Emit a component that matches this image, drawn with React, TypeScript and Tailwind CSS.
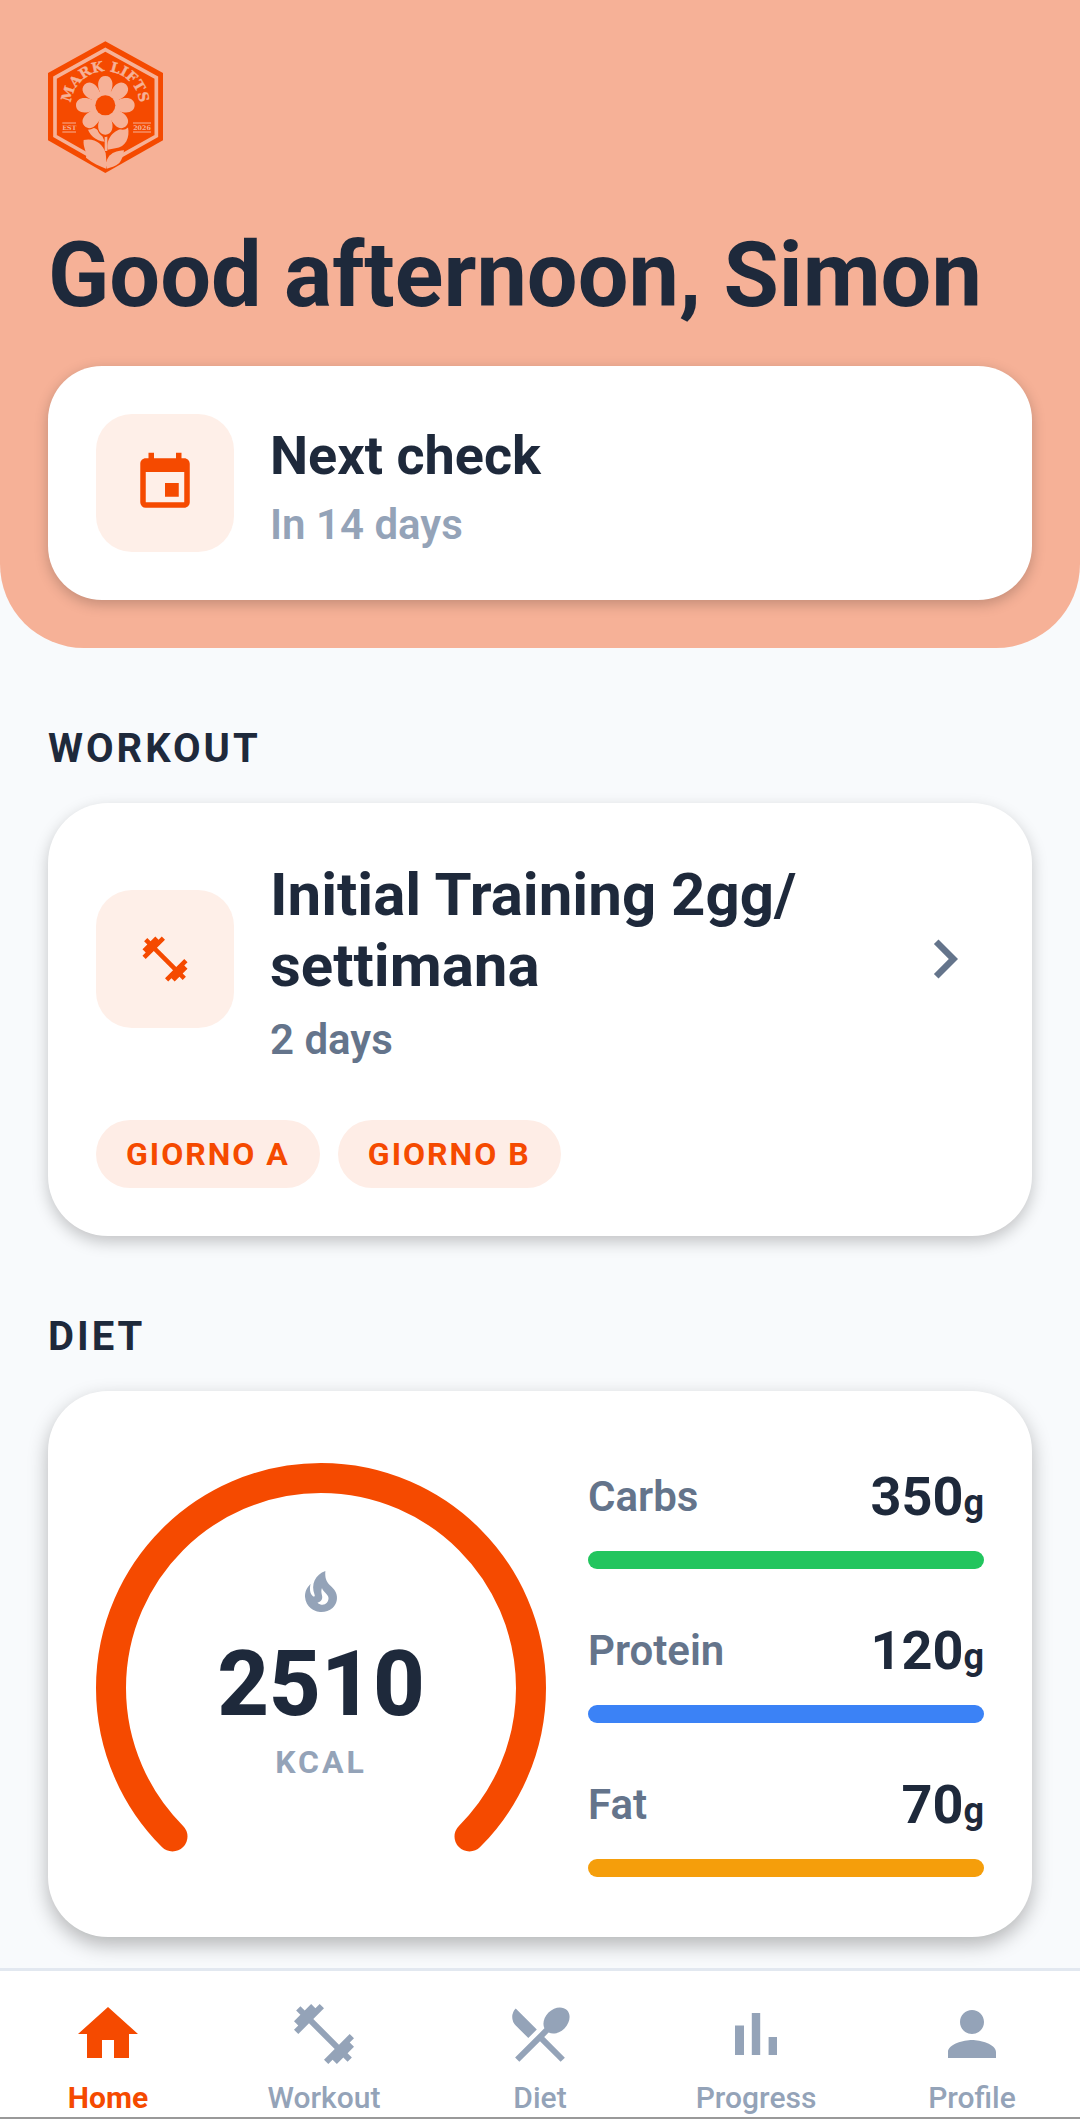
import React from 'react';
import {
  MdChevronRight,
  MdEvent,
  MdFitnessCenter,
  MdHome,
  MdPerson,
  MdRestaurantMenu,
} from 'react-icons/md';

const macros = [
  { id: 'carbs', name: 'Carbs', grams: 350, bar: 'bg-[#22c55e]' },
  { id: 'protein', name: 'Protein', grams: 120, bar: 'bg-[#3b82f6]' },
  { id: 'fat', name: 'Fat', grams: 70, bar: 'bg-[#f59e0b]' },
];

const workoutDays = ['Giorno A', 'Giorno B'];

const BarsIcon = ({ className }: { className?: string }) => (
  <svg viewBox="0 0 24 24" fill="currentColor" className={className}>
    <path d="M5 9.2h3V19H5zM10.6 5h2.8v14h-2.8zM16.2 13H19v6h-2.8z" />
  </svg>
);

const FlameIcon = ({ className }: { className?: string }) => (
  <svg viewBox="0 0 24 24" fill="currentColor" className={className}>
    <path d="M19.48 12.35c-1.57-4.08-5.9-3.6-5.3-10.85C9.29 3.3 6.68 8 8.87 13.62c.18.46-.36.89-.75.59-1.81-1.37-1.9-3.94-1.3-6.31C4.69 10.16 4 11.84 4 14.37c.38 5.6 5.11 7.32 6.81 7.54 2.43.31 5.06-.14 6.95-1.87 2.08-1.93 2.84-5.01 1.72-7.69zM10.2 17.38c1.44-.35 2.18-1.39 2.38-2.31.33-1.43-.96-2.83-.09-5.09.33 1.87 3.27 3.04 3.27 5.08.08 2.53-2.66 4.7-5.56 2.32z" />
  </svg>
);

const tabs = [
  { label: 'Home', icon: MdHome, active: true },
  { label: 'Workout', icon: MdFitnessCenter, active: false },
  { label: 'Diet', icon: MdRestaurantMenu, active: false },
  { label: 'Progress', icon: BarsIcon, active: false },
  { label: 'Profile', icon: MdPerson, active: false },
];

const Logo = () => (
  <svg
    viewBox="24 32 345 396"
    className="h-[132px] w-[115px]"
    role="img"
    aria-label="Mark Lifts"
  >
    <path d="M196 33 369 128V330L196 428 24 330V128Z" fill="#f54a00" />
    <path d="M196 58 349 142V317L196 403 45 317V142Z" fill="none" stroke="#f6b197" strokeWidth="11" />

    {/* Lettering */}
    <path id="logo-arc" d="M93 226A103 103 0 0 1 299 226" fill="none" />
    <text
      fill="#f6b197"
      stroke="#f6b197"
      strokeWidth="1"
      fontSize="42"
      fontWeight="700"
      fontFamily="'DejaVu Serif', serif"
    >
      <textPath href="#logo-arc" startOffset="50%" textAnchor="middle">
        MARK LIFTS
      </textPath>
    </text>
    <path d="M67 278H108M67 305H108M279 278H333M279 305H333" stroke="#f6b197" strokeWidth="3" />
    <g fill="#f6b197" fontSize="19" fontWeight="700" fontFamily="'DejaVu Serif', serif" textAnchor="middle">
      <text x="88" y="299">EST</text>
      <text x="306" y="299">2026</text>
    </g>

    {/* Stem and leaves */}
    <g fill="#f6b197">
      <path d="M140 286C158 294 178 286 194 334C168 332 146 314 140 286Z" />
      <path d="M264 290C270 322 258 350 226 354L203 358C198 318 226 296 264 290Z" />
      <path d="M131 329C164 322 188 340 197 368C199 388 200 400 198 415C180 408 158 398 138 382C142 366 128 350 131 329Z" />
      <path d="M252 360C250 376 246 388 238 398C226 408 212 412 200 415C194 390 206 362 252 360Z" />
    </g>
    <path d="M198 318V362" stroke="#f6b197" strokeWidth="8" />

    {/* Flower */}
    <g fill="#f6b197" stroke="#f54a00" strokeWidth="8">
      <ellipse cx="196" cy="275" rx="24" ry="41" />
      <ellipse cx="196" cy="275" rx="24" ry="41" transform="rotate(45 196 225)" />
      <ellipse cx="196" cy="275" rx="24" ry="41" transform="rotate(-45 196 225)" />
    </g>
    <g fill="#f6b197">
      {[0, 45, 90, 135, 180, 225, 270, 315].map((angle) => (
        <path
          key={angle}
          d="M196 225 180 186C168 160 176 137 196 137S224 160 212 186Z"
          transform={`rotate(${angle} 196 225)`}
        />
      ))}
      <circle cx="196" cy="225" r="44" />
    </g>
    <circle cx="196" cy="225" r="30" fill="#f54a00" />
  </svg>
);

const IconTile = ({ children }: { children: React.ReactNode }) => (
  <div className="flex size-[138px] shrink-0 items-center justify-center rounded-[36px] bg-[#feefe8] text-[#f54a00]">
    {children}
  </div>
);

const SectionTitle = ({ children }: { children: React.ReactNode }) => (
  <h2 className="text-[40px] leading-[46px] font-bold tracking-[3px] uppercase">{children}</h2>
);

export default function App() {
  return (
    <div className="flex min-h-screen flex-col bg-[#f8fafc] font-['Roboto',sans-serif] text-[#1e293b]">
      {/* Greeting */}
      <header className="rounded-b-[84px] bg-[#f6b197] px-12 pt-[41px] pb-12">
        <Logo />
        <h1 className="mt-[50px] text-[90px] leading-[105px] font-bold">Good afternoon, Simon</h1>
        <div className="mt-[38px] flex items-center gap-9 rounded-[54px] bg-white p-12 shadow-[0_4px_14px_rgba(0,0,0,0.22)]">
          <IconTile>
            <MdEvent className="size-[66px]" />
          </IconTile>
          <div className="pt-2">
            <p className="text-[54px] leading-[64px] font-bold">Next check</p>
            <p className="mt-3 text-[42px] leading-[50px] font-semibold text-[#94a3b8]">In 14 days</p>
          </div>
        </div>
      </header>

      <main className="flex-1 px-12 pt-[78px] pb-[31px]">
        {/* Workout */}
        <SectionTitle>Workout</SectionTitle>
        <section className="mt-[31px] rounded-[60px] bg-white px-12 pt-[50px] pb-12 shadow-[0_6px_16px_rgba(0,0,0,0.22)]">
          <a href="#workout" className="flex items-center gap-9">
            <IconTile>
              <MdFitnessCenter className="size-[54px]" />
            </IconTile>
            <div className="flex-1 pt-1.5">
              <h3 className="text-[60px] leading-[71px] font-bold">
                Initial Training 2gg/
                <wbr />
                settimana
              </h3>
              <p className="mt-3.5 text-[42px] leading-[50px] font-semibold text-[#64748b]">2 days</p>
            </div>
            <MdChevronRight className="size-[78px] text-[#64748b]" />
          </a>
          <ul className="mt-[55px] flex gap-[18px]">
            {workoutDays.map((day) => (
              <li
                key={day}
                className="rounded-full bg-[#feede6] px-[30px] py-[14px] text-[32px] leading-[40px] font-bold tracking-[2px] text-[#f54a00] uppercase"
              >
                {day}
              </li>
            ))}
          </ul>
        </section>

        {/* Diet */}
        <div className="mt-[78px]">
          <SectionTitle>Diet</SectionTitle>
        </div>
        <section className="mt-[31px] flex items-start gap-[42px] rounded-[60px] bg-white px-12 pt-[72px] pb-[60px] shadow-[0_8px_20px_rgba(0,0,0,0.28)]">
          <div className="grid shrink-0 justify-items-center">
            <svg viewBox="0 0 450 390" className="col-start-1 row-start-1 h-[390px] w-[450px]">
              <path
                d="M76.5 373.5A210 210 0 1 1 373.5 373.5"
                fill="none"
                stroke="#f54a00"
                strokeWidth="30"
                strokeLinecap="round"
              />
            </svg>
            <div className="col-start-1 row-start-1 flex flex-col items-center pt-[105px]">
              <FlameIcon className="size-12 text-[#94a3b8]" />
              <p className="mt-4 text-[90px] leading-[106px] font-extrabold">2510</p>
              <p className="mt-1 text-[32px] leading-[40px] font-bold tracking-[3px] text-[#94a3b8]">KCAL</p>
            </div>
          </div>

          <div className="flex flex-1 flex-col gap-[50px] pt-0.5">
            {macros.map((macro) => (
              <div key={macro.id}>
                <div className="flex items-center justify-between">
                  <span className="text-[42px] leading-[50px] font-semibold text-[#64748b]">{macro.name}</span>
                  <span className="text-[54px] leading-[63px] font-bold">
                    {macro.grams}
                    <span className="text-[36px] leading-none">g</span>
                  </span>
                </div>
                <div className={`mt-[23px] h-[18px] rounded-full ${macro.bar}`} />
              </div>
            ))}
          </div>
        </section>
      </main>

      {/* Tab bar */}
      <nav className="flex border-t-[3px] border-b-2 border-t-[#e2e8f0] border-b-[#999999] bg-white pt-[27px]">
        {tabs.map(({ label, icon: Icon, active }) => (
          <a
            key={label}
            href={`#${label.toLowerCase()}`}
            className={`flex flex-1 flex-col items-center gap-[11px] pb-0.5 text-[30px] leading-[34px] ${
              active ? 'font-bold text-[#f54a00]' : 'font-medium text-[#94a3b8]'
            }`}
          >
            <Icon className="size-[72px]" />
            {label}
          </a>
        ))}
      </nav>
    </div>
  );
}
